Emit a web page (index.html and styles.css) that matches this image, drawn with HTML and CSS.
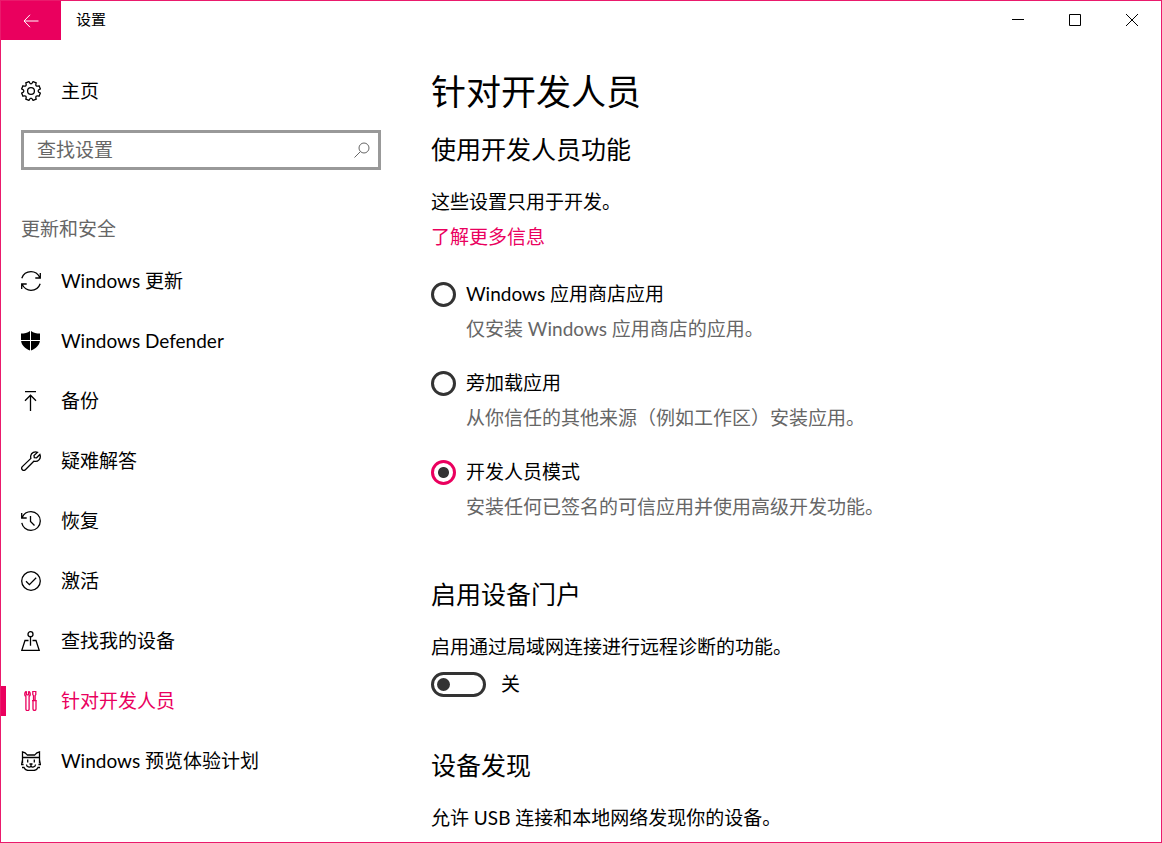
FILE: index.html
```
<!DOCTYPE html>
<html lang="zh-CN">
<head>
    <meta charset="UTF-8">
    <meta name="viewport" content="width=device-width, initial-scale=1.0">
    <title>设置</title>
    <link rel="stylesheet" href="styles.css">
</head>
<body>
    <div class="window">
        <header class="titlebar">
            <button class="back" type="button" aria-label="返回">
                <svg width="16" height="14" viewBox="0 0 16 14"><path d="M7 0.8L1 7l6 6.2M1 7h14.5"/></svg>
            </button>
            <span class="titlebar-text">设置</span>
            <div class="window-buttons">
                <button type="button" aria-label="最小化">
                    <svg width="12" height="12" viewBox="0 0 12 12"><path d="M0 5.5h12"/></svg>
                </button>
                <button type="button" aria-label="最大化">
                    <svg width="12" height="12" viewBox="0 0 12 12"><path d="M0.5 0.5h11v11H0.5z"/></svg>
                </button>
                <button type="button" aria-label="关闭">
                    <svg width="12" height="12" viewBox="0 0 12 12"><path d="M0 0l12 12M12 0L0 12"/></svg>
                </button>
            </div>
        </header>

        <div class="content">
            <aside class="sidebar">
                <a class="nav-item home" href="#">
                    <svg class="icon" viewBox="0 0 20 20"><path d="M12.1 0.6L15.2 1.9Q13.7 6.3 18.1 4.8L19.4 7.9Q14.8 10 19.4 12.1L18.1 15.2Q13.7 13.7 15.2 18.1L12.1 19.4Q10 14.8 7.9 19.4L4.8 18.1Q6.3 13.7 1.9 15.2L0.6 12.1Q5.2 10 0.6 7.9L1.9 4.8Q6.3 6.3 4.8 1.9L7.9 0.6Q10 5.2 12.1 0.6z"/><circle cx="10" cy="10" r="3.4"/></svg>
                    <span>主页</span>
                </a>

                <div class="search">
                    <input type="search" placeholder="查找设置" aria-label="查找设置">
                    <button type="button" aria-label="搜索">
                        <svg width="16" height="16" viewBox="0 0 16 16"><circle cx="10" cy="6" r="5"/><path d="M6.4 9.6L0.5 15.5"/></svg>
                    </button>
                </div>

                <h2 class="category">更新和安全</h2>

                <nav>
                    <a class="nav-item" href="#">
                        <svg class="icon" viewBox="0 0 20 20"><path d="M0.8 7.2C2.2 3.2 5.8 0.7 10 0.7c4 0 7 2.2 8.8 5.8M19.3 2v5h-5M19.2 12.8c-1.4 4-5 6.5-9.2 6.5-4 0-7-2.2-8.8-5.8M0.7 18v-5h5"/></svg>
                        <span>Windows 更新</span>
                    </a>
                    <a class="nav-item" href="#">
                        <svg class="icon solid" viewBox="0 0 20 20"><path d="M9 0v9H0V2.6C3.6 2.6 6.4 1.8 9 0zM10 0c2.6 1.8 5.4 2.6 9 2.6V9h-9zM0.1 10H9v9.6C4 17.4 0.6 14.3 0.1 10zM10 10h8.9c-0.5 4.3-3.9 7.4-8.9 9.6z"/></svg>
                        <span>Windows Defender</span>
                    </a>
                    <a class="nav-item" href="#">
                        <svg class="icon" viewBox="0 0 20 20"><path d="M4 0.7h11M9.5 20V4.2M4 9.7l5.5-5.5 5.5 5.5"/></svg>
                        <span>备份</span>
                    </a>
                    <a class="nav-item" href="#">
                        <svg class="icon" viewBox="0 0 20 20"><path d="M16.6 1.3C13.8 0 10.3 1.6 9.7 4.8c-0.2 1 0 1.8 0.2 2.6L1.3 15.6c-1.8 2.2 0.8 5 3.1 3.2l8.4-8.6c4.2 1.2 7.7-2.6 6.1-6.7L15.6 6.8 13.3 6.6 13 4.6z"/></svg>
                        <span>疑难解答</span>
                    </a>
                    <a class="nav-item" href="#">
                        <svg class="icon" viewBox="0 0 20 20"><path d="M0.7 2v5h5M1.2 6.5C2.8 2.8 6 0.7 10 0.7c5.2 0 9.3 4.1 9.3 9.3s-4.1 9.3-9.3 9.3c-4.6 0-8.4-3.2-9.2-7.5M9.5 5v5.5l4 4"/></svg>
                        <span>恢复</span>
                    </a>
                    <a class="nav-item" href="#">
                        <svg class="icon" viewBox="0 0 20 20"><circle cx="10" cy="10" r="9.3"/><path d="M5 10.2l3.4 3.4 6.8-6.8"/></svg>
                        <span>激活</span>
                    </a>
                    <a class="nav-item" href="#">
                        <svg class="icon" viewBox="0 0 20 20"><circle cx="9.5" cy="3.2" r="2.5"/><path d="M9.5 5.7v9M7.5 9.5H4L0.8 19.3h17.4L15 9.5h-3.5"/></svg>
                        <span>查找我的设备</span>
                    </a>
                    <a class="nav-item active" href="#" aria-current="page">
                        <svg class="icon" viewBox="0 0 20 20"><path d="M5.4 0.3v3.5h2.2V0.3M5.4 0.3C3.5 1.1 3.1 4.2 4.9 5.6v12.7c0 1.7 3.2 1.7 3.2 0V5.6C9.9 4.2 9.5 1.1 7.6 0.3M11.8 0.4h3v3.2l-0.7 1v4.8h-1.6V4.6l-0.7-1zM11 9.7h4.8M12 9.7v8.4c0 1.8 3 1.8 3 0V9.7"/></svg>
                        <span>针对开发人员</span>
                    </a>
                    <a class="nav-item" href="#">
                        <svg class="icon" viewBox="0 0 20 20"><path d="M1.5 12V0.8c2 0.3 3.6 1.5 4.8 3.2h7.4c1.2-1.7 2.8-2.9 4.8-3.2V12M1 6.5h18M1.5 9L0.6 13.5h2M18.5 9l0.9 4.5h-2M1 16.5h2c0.8 2 2 2.9 4 2.9h6c2 0 3.2-0.9 4-2.9h2M6.7 8.5v3M13.3 8.5v3M8.5 13h3M10 13v2.500M5.500 13.500c0 2.700 3.400 3.200 4.500 1.600 1.100 1.600 4.500 1.100 4.500-1.600"/></svg>
                        <span>Windows 预览体验计划</span>
                    </a>
                </nav>
            </aside>

            <main class="page">
                <h1>针对开发人员</h1>

                <section>
                    <h2>使用开发人员功能</h2>
                    <p>这些设置只用于开发。</p>
                    <a class="more" href="#">了解更多信息</a>

                    <div class="options">
                        <div class="option">
                            <input type="radio" name="mode" id="mode-store">
                            <label for="mode-store">Windows 应用商店应用</label>
                            <p>仅安装 Windows 应用商店的应用。</p>
                        </div>
                        <div class="option">
                            <input type="radio" name="mode" id="mode-sideload">
                            <label for="mode-sideload">旁加载应用</label>
                            <p>从你信任的其他来源（例如工作区）安装应用。</p>
                        </div>
                        <div class="option">
                            <input type="radio" name="mode" id="mode-developer" checked>
                            <label for="mode-developer">开发人员模式</label>
                            <p>安装任何已签名的可信应用并使用高级开发功能。</p>
                        </div>
                    </div>
                </section>

                <section>
                    <h2>启用设备门户</h2>
                    <p>启用通过局域网连接进行远程诊断的功能。</p>
                    <div class="toggle">
                        <input type="checkbox" role="switch" id="portal">
                        <label for="portal">关</label>
                    </div>
                </section>

                <section>
                    <h2>设备发现</h2>
                    <p>允许 USB 连接和本地网络发现你的设备。</p>
                </section>
            </main>
        </div>
    </div>
</body>
</html>
```
FILE: styles.css
```
* {
    box-sizing: border-box;
}

body {
    margin: 0;
    font-family: Lato, "Noto Sans CJK SC", sans-serif;
    font-size: 19px;
    line-height: 26px;
    color: #000000;
    background-color: #ffffff;
}

h1, h2, p {
    margin: 0;
    font-weight: normal;
}

a {
    color: inherit;
    text-decoration: none;
}

button, input {
    font: inherit;
    margin: 0;
}

button {
    display: flex;
    align-items: center;
    justify-content: center;
    padding: 0;
    border: none;
    background: none;
}

svg {
    fill: none;
    stroke: currentColor;
}

.window {
    min-height: 100vh;
    border: 1px solid #ea1a6c;
}

/* Title bar */
.titlebar {
    display: flex;
    height: 39px;
    font-size: 15px;
    line-height: 37px;
}

.back {
    width: 60px;
    height: 39px;
    color: #ffffff;
    background-color: #ea005e;
}

.titlebar-text {
    flex: 1;
    padding-left: 15px;
}

.window-buttons {
    display: flex;
    padding-right: 1px;
}

.window-buttons button {
    width: 57px;
    height: 37px;
}

.content {
    display: flex;
}

/* Sidebar */
.sidebar {
    flex: 0 0 400px;
    padding-top: 21px;
}

.nav-item {
    display: flex;
    align-items: center;
    gap: 20px;
    height: 60px;
    padding-left: 20px;
}

.home {
    margin-bottom: 9px;
}

.icon {
    width: 20px;
    height: 20px;
    stroke-width: 1.3;
}

.solid {
    fill: currentColor;
    stroke: none;
}

.nav-item.active {
    color: #ea005e;
    background: linear-gradient(#ea005e, #ea005e) left center / 5px 30px no-repeat;
}

.search {
    display: flex;
    height: 40px;
    margin: 0 20px;
    border: 3px solid #999999;
}

.search input {
    flex: 1;
    min-width: 0;
    padding: 0 0 0 13px;
    border: none;
    outline: none;
    background: none;
}

.search input::placeholder {
    color: #666666;
    opacity: 1;
}

.search button {
    width: 32px;
    color: #666666;
}

.category {
    padding: 46px 20px 9px;
    font-size: 19px;
    color: #666666;
}

/* Page */
.page {
    flex: 1;
    padding: 27px 30px 10px;
}

.page h1 {
    margin-bottom: 18px;
    font-size: 35px;
    line-height: 48px;
}

.page h2 {
    margin-bottom: 24px;
    font-size: 25px;
    line-height: 32px;
}

.more {
    display: inline-block;
    margin-top: 9px;
    color: #ea005e;
}

.options {
    display: grid;
    gap: 28px;
    margin: 31px 0 58px;
}

.option {
    display: grid;
    grid-template-columns: 25px 1fr;
    column-gap: 10px;
    row-gap: 9px;
    align-items: center;
}

.option p {
    grid-column: 2;
    color: #666666;
}

.option input,
.toggle input {
    appearance: none;
    height: 25px;
    border: 3px solid #333333;
    background-color: #ffffff;
}

.option input {
    width: 25px;
    border-radius: 50%;
}

.option input:checked {
    border-color: #ea005e;
    background: radial-gradient(circle, #333333 5px, #ffffff 6px);
}

.toggle {
    display: flex;
    align-items: center;
    gap: 15px;
    margin: 11px 0 52px;
}

.toggle input {
    display: flex;
    align-items: center;
    width: 55px;
    padding: 0 3px;
    border-radius: 13px;
}

.toggle input::before {
    content: "";
    width: 13px;
    height: 13px;
    border-radius: 50%;
    background-color: #333333;
}

.toggle input:checked {
    justify-content: flex-end;
    border-color: #ea005e;
}
```
